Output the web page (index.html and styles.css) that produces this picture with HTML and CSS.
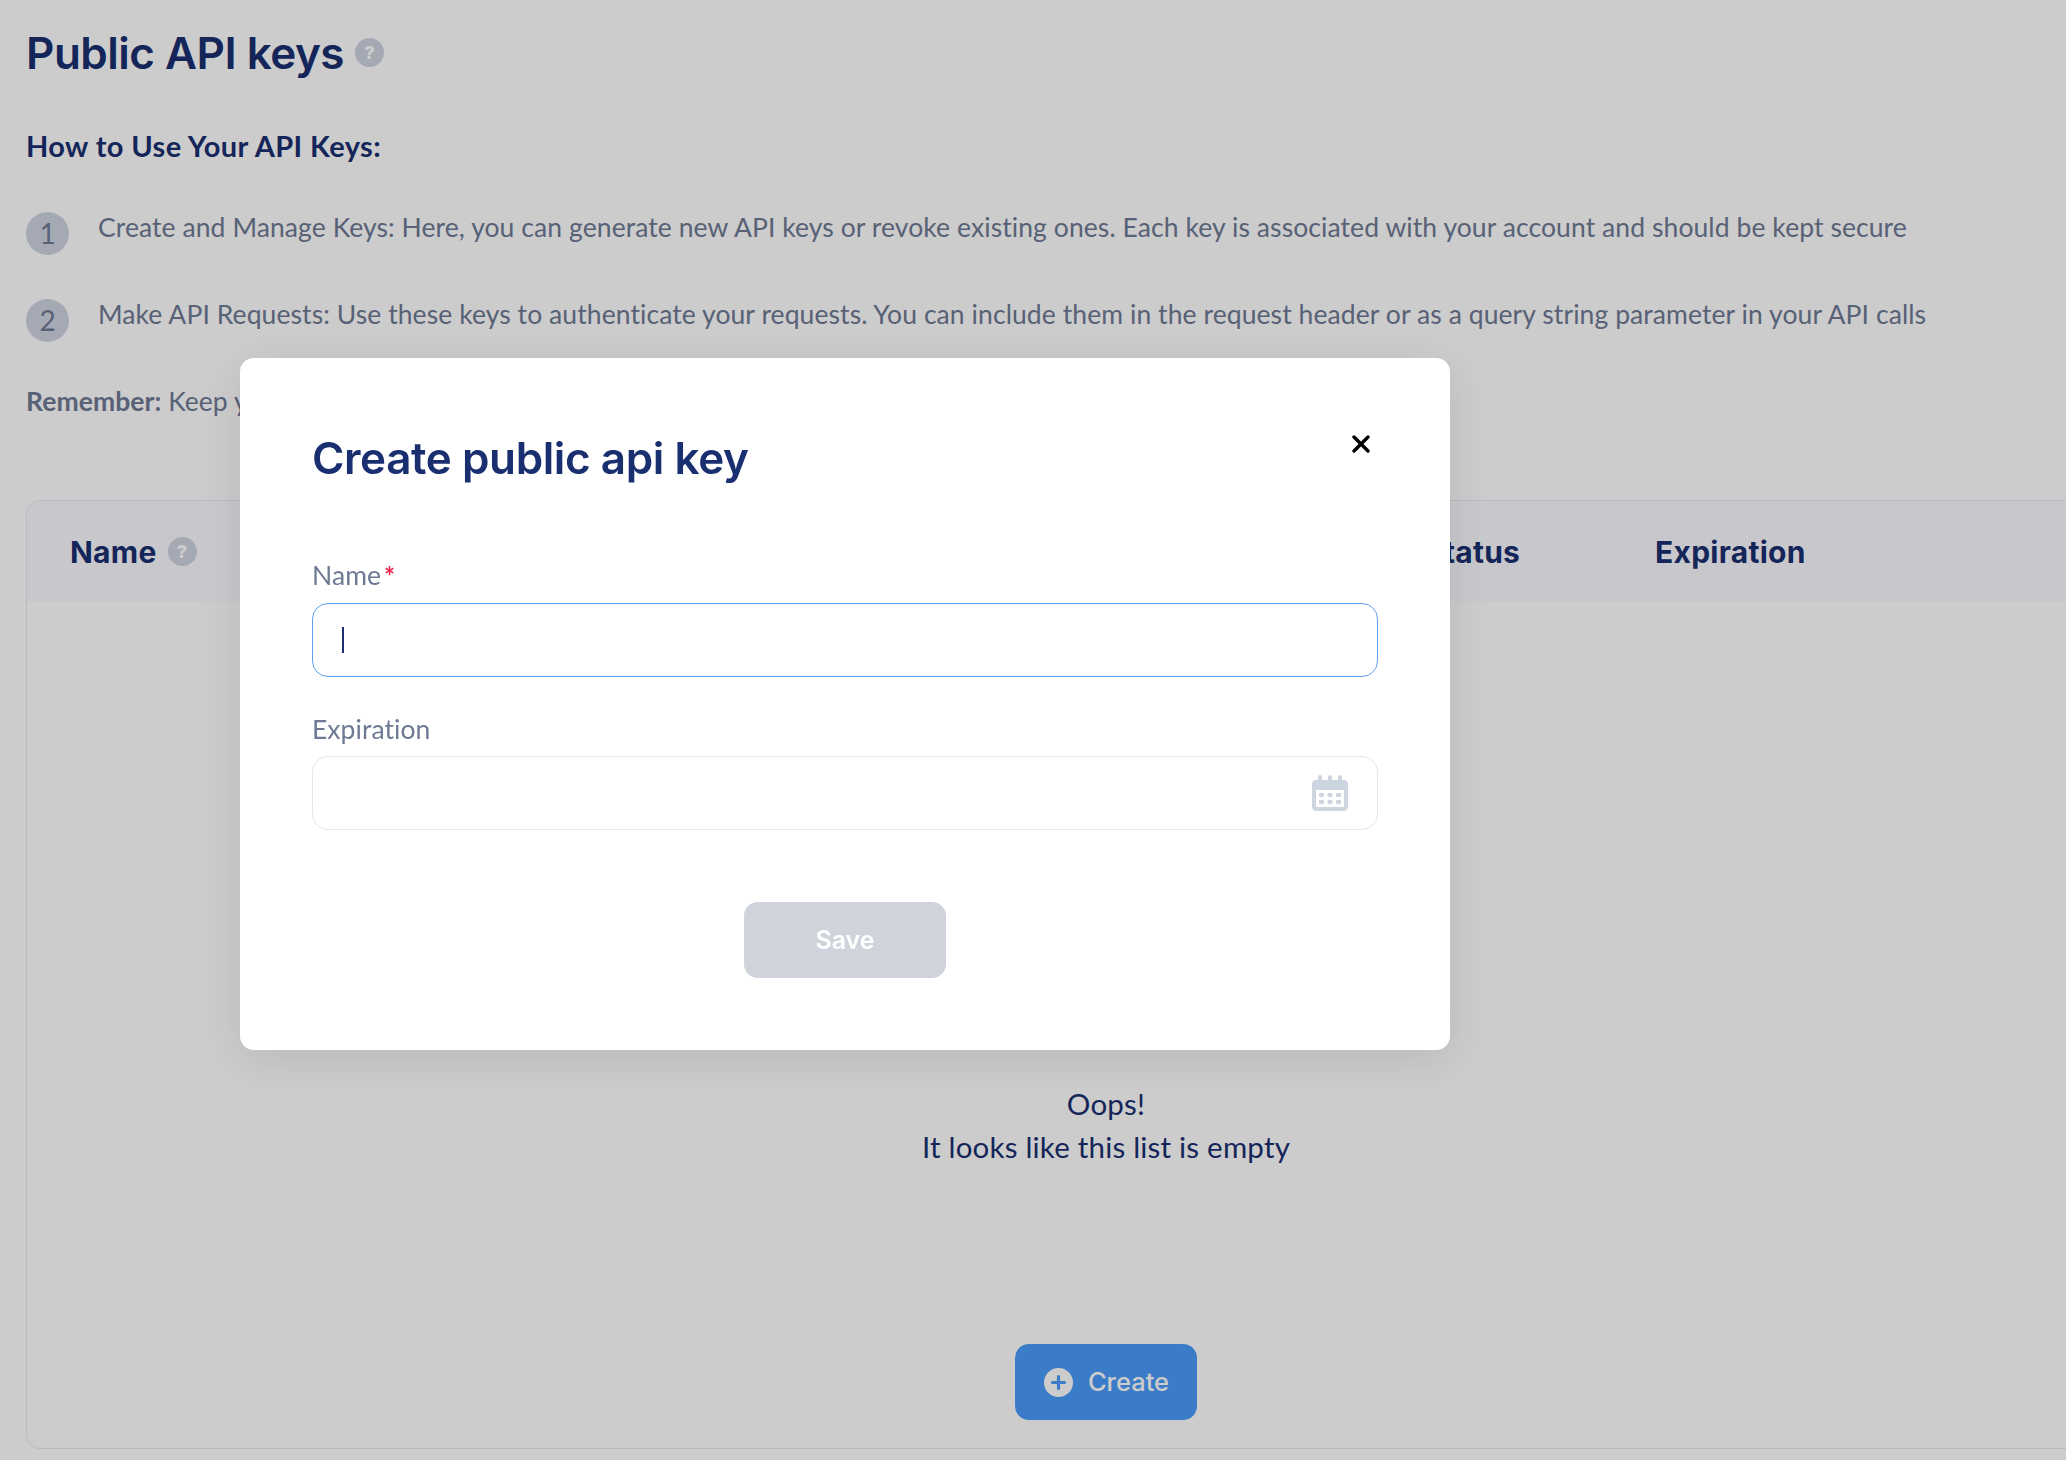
FILE: index.html
```html
<!DOCTYPE html>
<html lang="en">
<head>
    <meta charset="UTF-8">
    <meta name="viewport" content="width=device-width, initial-scale=1.0">
    <title>Public API keys</title>
    <link rel="stylesheet" href="styles.css">
</head>
<body>
    <div class="page">
        <div class="title-row">
            <h1>Public API keys</h1>
            <span class="help">?</span>
        </div>
        <h2>How to Use Your API Keys:</h2>
        <div class="step">
            <span class="step-num">1</span>
            <p>Create and Manage Keys: Here, you can generate new API keys or revoke existing ones. Each key is associated with your account and should be kept secure</p>
        </div>
        <div class="step">
            <span class="step-num">2</span>
            <p>Make API Requests: Use these keys to authenticate your requests. You can include them in the request header or as a query string parameter in your API calls</p>
        </div>
        <p class="remember"><b>Remember:</b> Keep your API keys safe and never share them publicly</p>

        <div class="table">
            <div class="table-head">
                <div class="col-name">Name <span class="help">?</span></div>
                <div>Status</div>
                <div>Expiration</div>
            </div>
            <div class="table-empty">
                <p>Oops!<br>It looks like this list is empty</p>
                <button class="create-btn" type="button">
                    <svg class="plus" viewBox="0 0 29 29" width="29" height="29">
                        <circle cx="14.5" cy="14.5" r="14.5" fill="#fff"/>
                        <path d="M14.5 8.5v12M8.5 14.5h12" stroke="#4a9cfa" stroke-width="3.2" stroke-linecap="round"/>
                    </svg>
                    Create
                </button>
            </div>
        </div>
    </div>

    <div class="overlay"></div>

    <div class="modal">
        <div class="modal-top">
            <h3>Create public api key</h3>
            <svg class="close" viewBox="0 0 18 18" width="18" height="18">
                <path d="M2 2l14 14M16 2L2 16" stroke="#000" stroke-width="3.4" stroke-linecap="round"/>
            </svg>
        </div>
        <label class="field-label field-label-name">Name<span class="req">*</span></label>
        <div class="field field-focus"><span class="caret"></span></div>
        <label class="field-label">Expiration</label>
        <div class="field">
            <svg class="calendar" viewBox="0 0 36 36" width="36" height="36">
                <path d="M8 0c1 0 2 1 2 2v3h6V2c0-1 1-2 2-2s2 1 2 2v3h6V2c0-1 1-2 2-2s2 1 2 2v3h2c2 0 4 2 4 4v23c0 2-2 4-4 4H4c-2 0-4-2-4-4V9c0-2 2-4 4-4h2V2c0-1 1-2 2-2z" fill="#cdd5e1"/>
                <rect x="4" y="15" width="28" height="17" fill="#fff"/>
                <g fill="#cdd5e1">
                    <rect x="7" y="18" width="5" height="4" rx="1"/>
                    <rect x="15.5" y="18" width="5" height="4" rx="1"/>
                    <rect x="24" y="18" width="5" height="4" rx="1"/>
                    <rect x="7" y="25" width="5" height="4" rx="1"/>
                    <rect x="15.5" y="25" width="5" height="4" rx="1"/>
                    <rect x="24" y="25" width="5" height="4" rx="1"/>
                </g>
            </svg>
        </div>
        <button class="save-btn" type="button">Save</button>
    </div>
</body>
</html>
```

FILE: styles.css
```css
html, body {
    margin: 0;
    height: 1460px;
    overflow: hidden;
    background: #fff;
}
body {
    font-family: "Lato", "Noto Sans", sans-serif;
    color: #1a2f70;
}
.page {
    padding: 0 0 0 26px;
    width: 2100px;
    box-sizing: border-box;
}
.title-row {
    display: flex;
    align-items: center;
    gap: 11px;
    height: 105px;
}
h1 {
    margin: 0;
    font: 600 44px "Inter", sans-serif;
    letter-spacing: -0.5px;
}
h2 {
    margin: 0;
    height: 102px;
    font: 700 29px/82px "Lato", sans-serif;
    letter-spacing: 0.4px;
}
.help {
    display: inline-flex;
    align-items: center;
    justify-content: center;
    width: 29px;
    height: 29px;
    border-radius: 50%;
    background: #cdd4e0;
    color: #fff;
    font: 800 18px "Inter", sans-serif;
}
.step {
    display: flex;
    gap: 29px;
    height: 87px;
}
.step p {
    margin: 0;
    font-size: 26.5px;
    line-height: 40px;
    letter-spacing: 0.08px;
    color: #6e7a94;
}
.step-num {
    flex: none;
    display: flex;
    align-items: center;
    justify-content: center;
    width: 43px;
    height: 43px;
    margin-top: 5px;
    padding-bottom: 2px;
    box-sizing: border-box;
    border-radius: 50%;
    background: #cdd4e0;
    color: #6e7a94;
    font-size: 28px;
}
.remember {
    margin: 0;
    font-size: 26.5px;
    line-height: 40px;
    letter-spacing: 0.06px;
    color: #6e7a94;
}
.table {
    margin-top: 79px;
    height: 949px;
    box-sizing: border-box;
    border: 1px solid #e6e8f2;
    border-radius: 14px;
    overflow: hidden;
}
.table-head {
    display: grid;
    grid-template-columns: 1354px 231px 1fr;
    align-items: center;
    height: 101px;
    padding-left: 43px;
    background: #fafbff;
    font: 700 30px "Inter", sans-serif;
    letter-spacing: 0.25px;
}
.col-name {
    display: flex;
    align-items: center;
    gap: 11px;
}
.table-empty {
    display: flex;
    flex-direction: column;
    align-items: center;
    width: 2066px;
    margin-left: -26px;
    box-sizing: border-box;
    padding-left: 144px;
}
.table-empty p {
    margin: 480px 0 0;
    font-size: 29.5px;
    line-height: 43px;
    letter-spacing: 0.2px;
    text-align: center;
}
.create-btn {
    display: flex;
    align-items: center;
    justify-content: center;
    gap: 15px;
    margin-top: 176px;
    width: 182px;
    height: 76px;
    padding-bottom: 2px;
    border: none;
    border-radius: 14px;
    background: #4a9cfa;
    color: #fff;
    font: 500 25.5px "Inter", sans-serif;
}
.plus {
    margin: 2px 0 0 1px;
}
.overlay {
    position: fixed;
    inset: 0;
    background: rgba(0, 0, 0, 0.2);
}
.modal {
    position: fixed;
    left: 240px;
    top: 358px;
    width: 1210px;
    height: 692px;
    box-sizing: border-box;
    padding: 0 72px;
    background: #fff;
    border-radius: 14px;
    box-shadow: 0 10px 50px rgba(0, 0, 0, 0.1);
}
.modal-top {
    display: flex;
    justify-content: space-between;
    height: 184px;
}
.modal-top h3 {
    margin: 73px 0 0;
    font: 600 44px/54px "Inter", sans-serif;
    letter-spacing: -0.4px;
}
.close {
    margin: 77px 8px 0 0;
}
.field-label {
    display: block;
    height: 61px;
    font-size: 26.5px;
    line-height: 68px;
    letter-spacing: 0.06px;
    color: #6e7a94;
}
.field-label-name {
    line-height: 67px;
}
.req {
    color: #e8294f;
    font-size: 26px;
    font-weight: 700;
    margin-left: 3px;
    vertical-align: -1px;
    line-height: 0;
}
.field {
    display: flex;
    align-items: center;
    justify-content: flex-end;
    height: 74px;
    margin-bottom: 18px;
    padding: 0 29px;
    box-sizing: border-box;
    border: 1px solid #e4e6ea;
    border-radius: 16px;
}
.field-focus {
    justify-content: flex-start;
    border-color: #5aa2ee;
}
.caret {
    width: 2px;
    height: 26px;
    background: #1a2f70;
}
.save-btn {
    display: block;
    width: 202px;
    height: 76px;
    margin: 72px auto 0;
    padding-bottom: 2px;
    border: none;
    border-radius: 14px;
    background: #cfd4dc;
    color: #fff;
    font: 600 25px "Inter", sans-serif;
}
```
